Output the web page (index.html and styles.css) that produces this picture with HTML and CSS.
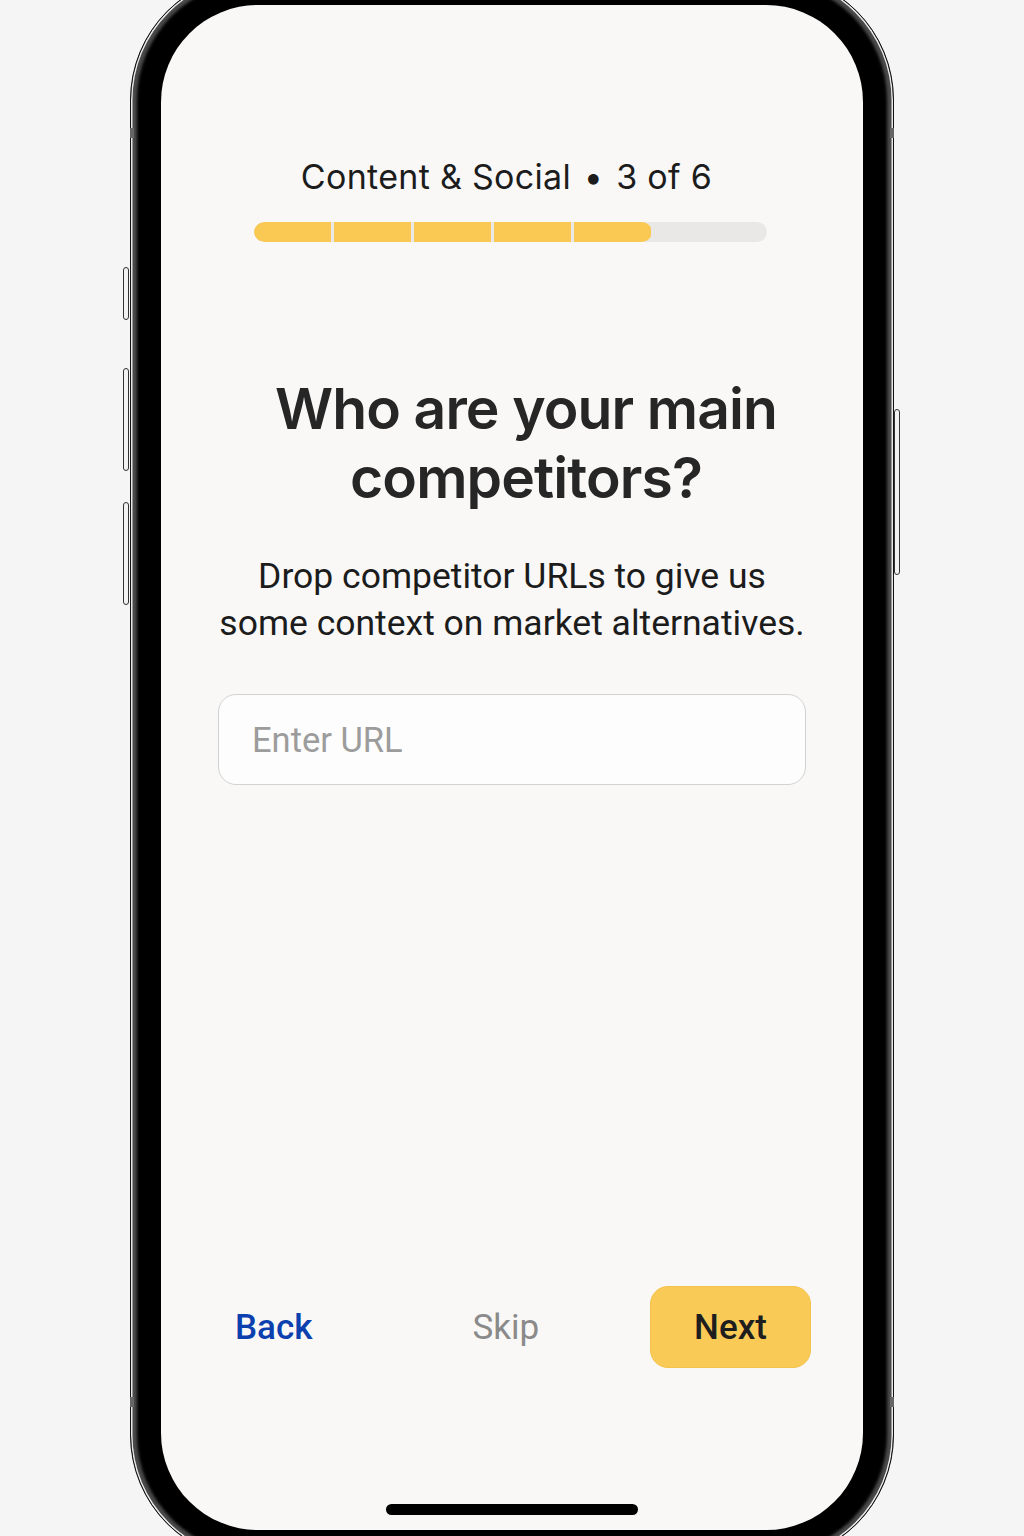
FILE: index.html
```html
<!DOCTYPE html>
<html lang="en">
<head>
<meta charset="utf-8">
<title>Competitors</title>
<link rel="stylesheet" href="styles.css">
</head>
<body>
<div class="stage">
  <div class="phone">
    <span class="btn btn-mute"></span>
    <span class="btn btn-volup"></span>
    <span class="btn btn-voldown"></span>
    <span class="btn btn-power"></span>
    <span class="band band-lt"></span>
    <span class="band band-lb"></span>
    <span class="band band-rt"></span>
    <span class="band band-rb"></span>
    <div class="screen">
      <div class="step">Content &amp; Social <span class="dot">•</span> 3 of 6</div>
      <div class="progress">
        <div class="fill">
          <span class="seg"></span><span class="seg"></span><span class="seg"></span><span class="seg"></span><span class="seg"></span>
        </div>
      </div>
      <h1 class="heading">Who are your main<br>competitors?</h1>
      <p class="sub">Drop competitor URLs to give us<br>some context on market alternatives.</p>
      <div class="field"><span class="placeholder">Enter URL</span></div>
      <div class="actions">
        <span class="back">Back</span>
        <span class="skip">Skip</span>
        <span class="next">Next</span>
      </div>
      <div class="home"></div>
    </div>
  </div>
</div>
</body>
</html>
```

FILE: styles.css
```css
* { box-sizing: border-box; }
html, body { margin: 0; padding: 0; }
body {
  background: #f5f5f5;
  width: 1024px;
  height: 1536px;
  overflow: hidden;
  font-family: "Inter", "Roboto", sans-serif;
}
.stage {
  display: flex;
  justify-content: center;
}
.phone {
  position: relative;
  width: 764px;
  height: 1587px;
  margin-top: -26px;
  padding: 30px;
  border-radius: 126px;
  background: #000;
  border: 1.5px solid #111;
  box-shadow: inset 0 0 0 1.5px #e8e8e8, inset 0 0 3px 6px #4a4a4a;
}
.btn {
  position: absolute;
  width: 6px;
  background: #f2f2f2;
  border: 1.3px solid #333;
  border-radius: 3px;
}
.btn-mute { left: -8px; top: 292px; height: 53px; }
.btn-volup { left: -8px; top: 393px; height: 103px; }
.btn-voldown { left: -8px; top: 527px; height: 103px; }
.btn-power { right: -7px; top: 434px; height: 166px; }
.band {
  position: absolute;
  width: 4px;
  height: 10px;
  background: #666;
}
.band-lt { left: -1px; top: 153px; }
.band-lb { left: -1px; bottom: 153px; }
.band-rt { right: -1px; top: 153px; }
.band-rb { right: -1px; bottom: 153px; }
.screen {
  height: 100%;
  background: #f9f8f7;
  border-radius: 97px;
  display: flex;
  flex-direction: column;
  align-items: center;
  padding: 150px 0 15px;
}
.step {
  font-size: 34px;
  line-height: 44px;
  color: #1c1c1c;
  letter-spacing: 0.3px;
  margin-right: 11px;
}
.dot { margin: 0 3px; }
.progress {
  margin-top: 23px;
  margin-right: 4px;
  width: 513px;
  height: 20px;
  border-radius: 10px;
  background: #e9e8e7;
  overflow: hidden;
}
.fill {
  width: 398px;
  height: 100%;
  display: flex;
  gap: 2.5px;
  border-radius: 10px;
  overflow: hidden;
}
.seg {
  flex: 1;
  background: #f9c954;
}
.heading {
  margin: 132px 0 0 28px;
  font-size: 57px;
  line-height: 69px;
  font-weight: 600;
  color: #262626;
  text-align: center;
  letter-spacing: -0.9px;
}
.sub {
  margin: 41px 0 0;
  font-family: "Roboto", sans-serif;
  font-size: 35.5px;
  line-height: 47px;
  color: #1c1c1c;
  text-align: center;
}
.field {
  margin-top: 47px;
  width: 588px;
  height: 91px;
  border: 1.5px solid #d2d2d2;
  border-radius: 18px;
  background: #fdfdfd;
  display: flex;
  align-items: center;
  padding-left: 33px;
}
.placeholder {
  font-family: "Roboto", sans-serif;
  font-size: 34.5px;
  color: #9c9c9c;
}
.actions {
  margin-top: auto;
  align-self: stretch;
  display: flex;
  align-items: center;
  padding: 0 52px 0 74px;
  font-family: "Roboto", sans-serif;
  font-size: 35px;
}
.back { color: #0b40ae; font-weight: 500; }
.skip { color: #8a8a8a; margin-left: 160px; }
.next {
  margin-left: auto;
  width: 161px;
  height: 82px;
  border-radius: 18px;
  background: #f9ca56;
  border: 1.5px solid #f3c24a;
  display: flex;
  align-items: center;
  justify-content: center;
  color: #1e1e1e;
  font-weight: 500;
}
.home {
  margin-top: 136px;
  width: 252px;
  height: 11px;
  border-radius: 6px;
  background: #000;
}
```
